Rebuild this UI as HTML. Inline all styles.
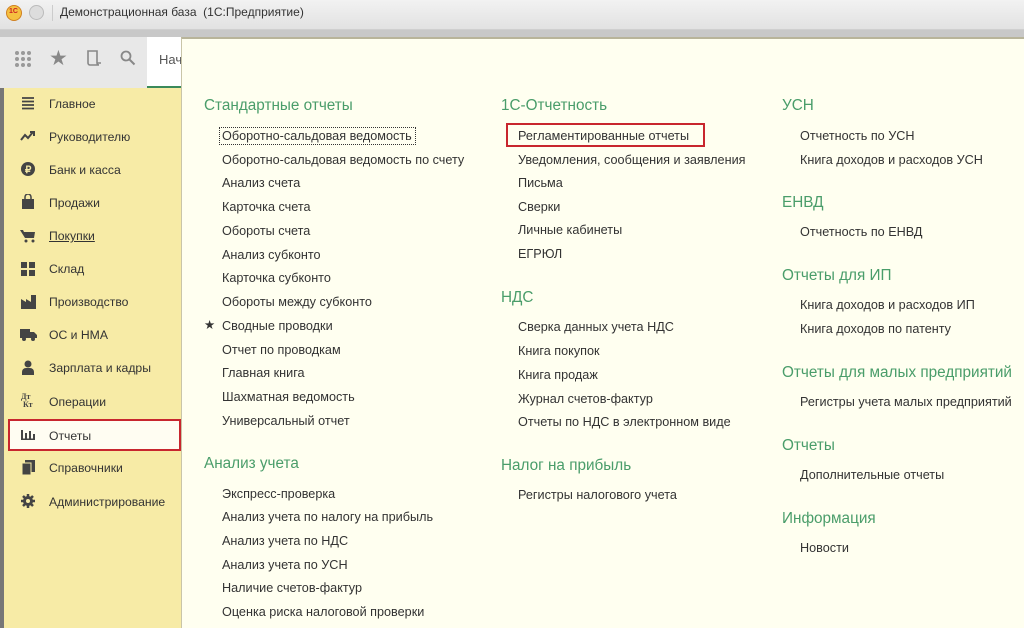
<!DOCTYPE html>
<html><head><meta charset="utf-8"><style>
*{margin:0;padding:0;box-sizing:border-box}
body{width:1024px;height:628px;overflow:hidden;position:relative;background:#fff;font-family:"Liberation Sans",sans-serif;color:#333}
.a{position:absolute;white-space:nowrap}
.t{font-size:12.65px;line-height:16px;color:#333}
.h{font-size:15.3px;line-height:18px;color:#4a9d6a}
.s{font-size:12.2px;line-height:16px;color:#333;margin-top:1px}
</style></head><body>
<div class="a" style="left:0;top:0;width:1024px;height:30px;background:linear-gradient(#f2f2f2,#e2e2e2);border-bottom:1px solid #cfcfcf"></div>
<div class="a" style="left:6px;top:5px;width:16px;height:16px;border-radius:50%;background:#f5c040;border:1px solid #d08020"></div>
<div class="a" style="left:9px;top:8px;font-size:7px;color:#c22;font-weight:bold">1С</div>
<div class="a" style="left:29px;top:5px;width:15px;height:15px;border-radius:50%;background:#ddd;border:1px solid #bbb"></div>
<div class="a" style="left:52px;top:5px;width:1px;height:16px;background:#ccc"></div>
<div class="a" style="left:60px;top:5px;font-size:12px;color:#333">Демонстрационная база &nbsp;(1С:Предприятие)</div>
<div class="a" style="left:0;top:30px;width:1024px;height:7px;background:#c8c8c8"></div>
<div class="a" style="left:0;top:37px;width:181px;height:51px;background:#e8e8e8"></div>
<div class="a" style="left:147px;top:37px;width:40px;height:51px;background:#fff;border-bottom:2px solid #3a8a5a"></div>
<div class="a" style="left:159px;top:52px;font-size:13px;color:#555">Нач</div>
<svg class="a" style="left:14px;top:50px" width="20" height="20"><g fill="#999"><circle cx="3" cy="3" r="2"/><circle cx="9" cy="3" r="2"/><circle cx="15" cy="3" r="2"/><circle cx="3" cy="9" r="2"/><circle cx="9" cy="9" r="2"/><circle cx="15" cy="9" r="2"/><circle cx="3" cy="15" r="2"/><circle cx="9" cy="15" r="2"/><circle cx="15" cy="15" r="2"/></g></svg>
<div class="a" style="left:49px;top:46px;font-size:21px;color:#888">★</div>
<svg class="a" style="left:85px;top:49px" width="18" height="18"><path d="M3 2h9v12a2 2 0 0 0 2 2H5a2 2 0 0 1-2-2z M12 14h4" fill="none" stroke="#888" stroke-width="1.6"/></svg>
<svg class="a" style="left:120px;top:50px" width="16" height="16"><circle cx="6" cy="6" r="4.5" fill="none" stroke="#888" stroke-width="1.8"/><path d="M9.5 9.5l5 5" stroke="#888" stroke-width="2"/></svg>
<div class="a" style="left:0;top:88px;width:181px;height:540px;background:#f7eba6"></div>
<div class="a" style="left:0;top:88px;width:4px;height:540px;background:#777"></div>
<div class="a" style="left:8px;top:419px;width:173px;height:32px;background:#fffdf2;border:2px solid #c8262e"></div>
<div class="a s" style="left:49px;top:95px">Главное</div>
<div class="a s" style="left:49px;top:128px">Руководителю</div>
<div class="a s" style="left:49px;top:161px">Банк и касса</div>
<div class="a s" style="left:49px;top:194px">Продажи</div>
<div class="a s" style="left:49px;top:227px;text-decoration:underline">Покупки</div>
<div class="a s" style="left:49px;top:260px">Склад</div>
<div class="a s" style="left:49px;top:293px">Производство</div>
<div class="a s" style="left:49px;top:326px">ОС и НМА</div>
<div class="a s" style="left:49px;top:359px">Зарплата и кадры</div>
<div class="a s" style="left:49px;top:393px">Операции</div>
<div class="a s" style="left:49px;top:427px">Отчеты</div>
<div class="a s" style="left:49px;top:459px">Справочники</div>
<div class="a s" style="left:49px;top:493px">Администрирование</div>
<svg class="a" style="left:21px;top:96px" width="14" height="14"><path d="M1 2h12M1 5.5h12M1 9h12M1 12.5h12" stroke="#444" stroke-width="1.8"/></svg>
<svg class="a" style="left:20px;top:130px" width="16" height="12"><path d="M1 10l4-5 3 3 5-6M10 2h4v4" fill="none" stroke="#444" stroke-width="2"/></svg>
<svg class="a" style="left:21px;top:162px" width="14" height="14"><circle cx="7" cy="7" r="7" fill="#444"/><text x="4" y="11" font-size="10" fill="#f7eba6" font-family="Liberation Sans" font-weight="bold">₽</text></svg>
<svg class="a" style="left:22px;top:194px" width="12" height="15"><path d="M0 5h12v10H0z" fill="#444"/><path d="M3 6V3a3 3 0 0 1 6 0v3" fill="none" stroke="#444" stroke-width="1.5"/></svg>
<svg class="a" style="left:20px;top:229px" width="16" height="14"><path d="M0 1h3l1 2h11l-1 6H5z" fill="#444"/><circle cx="6" cy="12" r="1.5" fill="#444"/><circle cx="13" cy="12" r="1.5" fill="#444"/></svg>
<svg class="a" style="left:21px;top:262px" width="14" height="14"><g fill="#444"><rect x="0" y="0" width="6" height="6"/><rect x="8" y="0" width="6" height="6"/><rect x="0" y="8" width="6" height="6"/><rect x="8" y="8" width="6" height="6"/></g></svg>
<svg class="a" style="left:21px;top:295px" width="15" height="14"><path d="M0 14V4l5 3V4l5 3V0h5v14z" fill="#444"/></svg>
<svg class="a" style="left:20px;top:329px" width="17" height="12"><path d="M0 0h10v9H0zM10 3h4l3 3v3h-7z" fill="#444"/><circle cx="4" cy="10" r="2" fill="#444"/><circle cx="13" cy="10" r="2" fill="#444"/></svg>
<svg class="a" style="left:22px;top:360px" width="12" height="15"><circle cx="6" cy="4" r="3.5" fill="#444"/><path d="M0 15v-3a4 4 0 0 1 4-4h4a4 4 0 0 1 4 4v3z" fill="#444"/></svg>
<div class="a" style="left:21px;top:393px;font-size:8px;line-height:8px;font-family:'Liberation Serif',serif;font-weight:bold;color:#444">Дт<br>&nbsp;Кт</div>
<svg class="a" style="left:21px;top:428px" width="14" height="12"><path d="M1 2v10M5 5v7M9 3v9M13 6v6M0 11.5h14" stroke="#444" stroke-width="2"/></svg>
<svg class="a" style="left:22px;top:460px" width="13" height="15"><path d="M3 0h10v12H3z" fill="#444"/><path d="M0 3h9v12H0z" fill="#444" stroke="#f7eba6" stroke-width="1"/></svg>
<svg class="a" style="left:21px;top:494px" width="14" height="14"><circle cx="7" cy="7" r="5" fill="#444"/><path d="M7 0v14M0 7h14M2 2l10 10M12 2L2 12" stroke="#444" stroke-width="2.5"/><circle cx="7" cy="7" r="2" fill="#f7eba6"/></svg>
<div class="a" style="left:181px;top:37px;width:843px;height:591px;background:#fffff0;border-top:2px solid #b8b49a;border-left:1px solid #c9c5a8"></div>
<div class="a h" style="left:204px;top:97px">Стандартные отчеты</div>
<div class="a" style="left:219px;top:127px;width:197px;height:18px;border:1px dotted #333"></div>
<div class="a t" style="left:222px;top:128px">Оборотно-сальдовая ведомость</div>
<div class="a t" style="left:222px;top:152px">Оборотно-сальдовая ведомость по счету</div>
<div class="a t" style="left:222px;top:175px">Анализ счета</div>
<div class="a t" style="left:222px;top:199px">Карточка счета</div>
<div class="a t" style="left:222px;top:223px">Обороты счета</div>
<div class="a t" style="left:222px;top:247px">Анализ субконто</div>
<div class="a t" style="left:222px;top:270px">Карточка субконто</div>
<div class="a t" style="left:222px;top:294px">Обороты между субконто</div>
<div class="a t" style="left:204px;top:317px">★</div>
<div class="a t" style="left:222px;top:318px">Сводные проводки</div>
<div class="a t" style="left:222px;top:342px">Отчет по проводкам</div>
<div class="a t" style="left:222px;top:365px">Главная книга</div>
<div class="a t" style="left:222px;top:389px">Шахматная ведомость</div>
<div class="a t" style="left:222px;top:413px">Универсальный отчет</div>
<div class="a h" style="left:204px;top:455px">Анализ учета</div>
<div class="a t" style="left:222px;top:486px">Экспресс-проверка</div>
<div class="a t" style="left:222px;top:509px">Анализ учета по налогу на прибыль</div>
<div class="a t" style="left:222px;top:533px">Анализ учета по НДС</div>
<div class="a t" style="left:222px;top:557px">Анализ учета по УСН</div>
<div class="a t" style="left:222px;top:580px">Наличие счетов-фактур</div>
<div class="a t" style="left:222px;top:604px">Оценка риска налоговой проверки</div>
<div class="a h" style="left:501px;top:97px">1С-Отчетность</div>
<div class="a" style="left:506px;top:123px;width:199px;height:24px;border:2px solid #c8262e"></div>
<div class="a t" style="left:518px;top:128px">Регламентированные отчеты</div>
<div class="a t" style="left:518px;top:152px">Уведомления, сообщения и заявления</div>
<div class="a t" style="left:518px;top:175px">Письма</div>
<div class="a t" style="left:518px;top:199px">Сверки</div>
<div class="a t" style="left:518px;top:222px">Личные кабинеты</div>
<div class="a t" style="left:518px;top:246px">ЕГРЮЛ</div>
<div class="a h" style="left:501px;top:289px">НДС</div>
<div class="a t" style="left:518px;top:319px">Сверка данных учета НДС</div>
<div class="a t" style="left:518px;top:343px">Книга покупок</div>
<div class="a t" style="left:518px;top:367px">Книга продаж</div>
<div class="a t" style="left:518px;top:391px">Журнал счетов-фактур</div>
<div class="a t" style="left:518px;top:414px">Отчеты по НДС в электронном виде</div>
<div class="a h" style="left:501px;top:457px">Налог на прибыль</div>
<div class="a t" style="left:518px;top:487px">Регистры налогового учета</div>
<div class="a h" style="left:782px;top:97px">УСН</div>
<div class="a t" style="left:800px;top:128px">Отчетность по УСН</div>
<div class="a t" style="left:800px;top:152px">Книга доходов и расходов УСН</div>
<div class="a h" style="left:782px;top:194px">ЕНВД</div>
<div class="a t" style="left:800px;top:224px">Отчетность по ЕНВД</div>
<div class="a h" style="left:782px;top:267px">Отчеты для ИП</div>
<div class="a t" style="left:800px;top:297px">Книга доходов и расходов ИП</div>
<div class="a t" style="left:800px;top:321px">Книга доходов по патенту</div>
<div class="a h" style="left:782px;top:364px">Отчеты для малых предприятий</div>
<div class="a t" style="left:800px;top:394px">Регистры учета малых предприятий</div>
<div class="a h" style="left:782px;top:437px">Отчеты</div>
<div class="a t" style="left:800px;top:467px">Дополнительные отчеты</div>
<div class="a h" style="left:782px;top:510px">Информация</div>
<div class="a t" style="left:800px;top:540px">Новости</div>
</body></html>
